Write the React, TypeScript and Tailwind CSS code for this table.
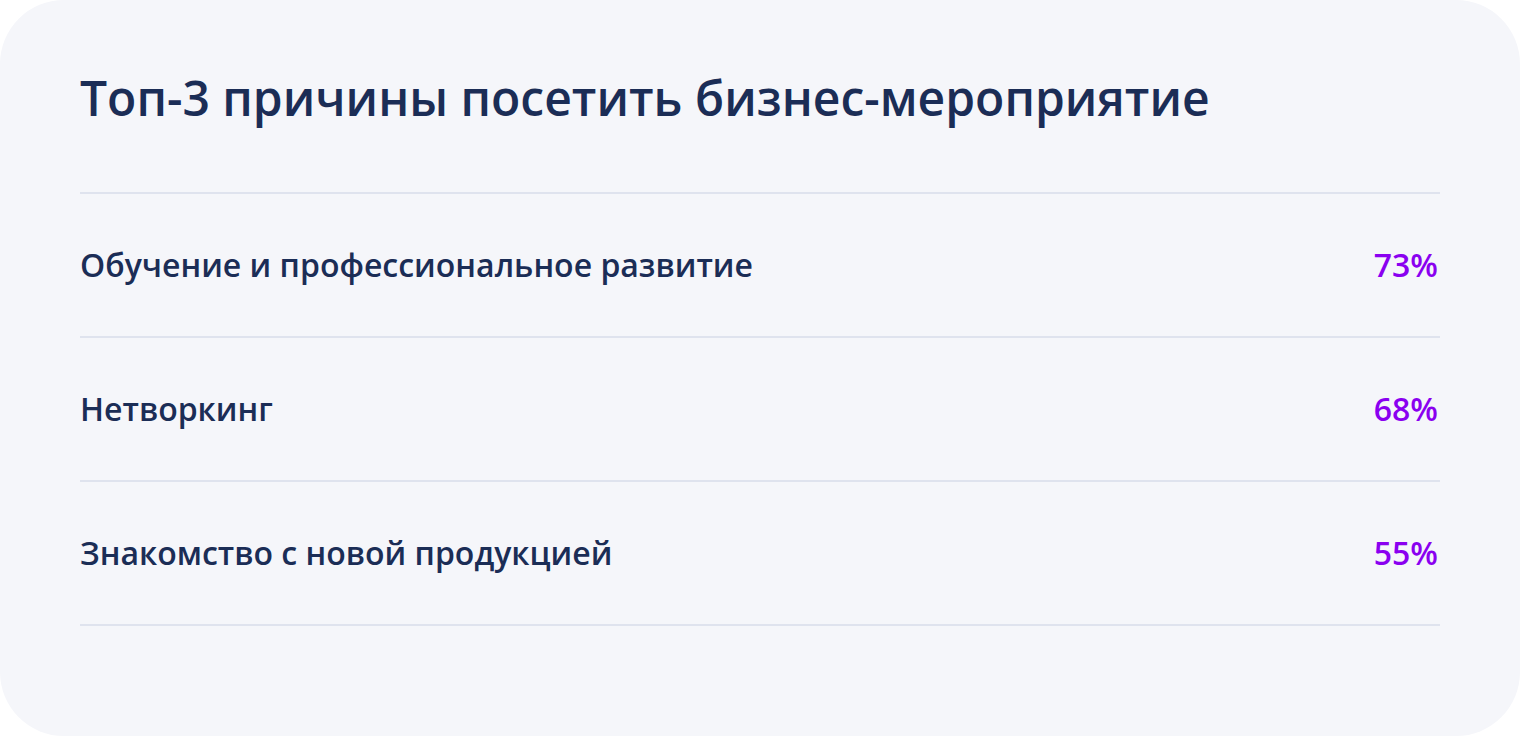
const REASONS = [
  { label: "Обучение и профессиональное развитие", value: "73%" },
  { label: "Нетворкинг", value: "68%" },
  { label: "Знакомство с новой продукцией", value: "55%" },
];

export default function App() {
  return (
    <div className="h-[736px] w-[1520px] bg-white font-['Open_Sans',sans-serif]">
      <div className="flex h-full flex-col rounded-[64px] bg-[#f5f6fa] px-20 pt-[69px]">
        <h2 className="text-[48px] font-semibold leading-[58px] text-[#1b2d56]">
          Топ-3 причины посетить бизнес-мероприятие
        </h2>
        <div className="mt-[65px] border-t-2 border-[#dfe3ee]">
          {REASONS.map((r) => (
            <div
              key={r.label}
              className="flex h-[144px] items-center justify-between border-b-2 border-[#dfe3ee] pr-0.5 text-[32px] font-semibold"
            >
              <span className="text-[#1b2d56]">{r.label}</span>
              <span className="text-[#8a00f0]">{r.value}</span>
            </div>
          ))}
        </div>
      </div>
    </div>
  );
}
